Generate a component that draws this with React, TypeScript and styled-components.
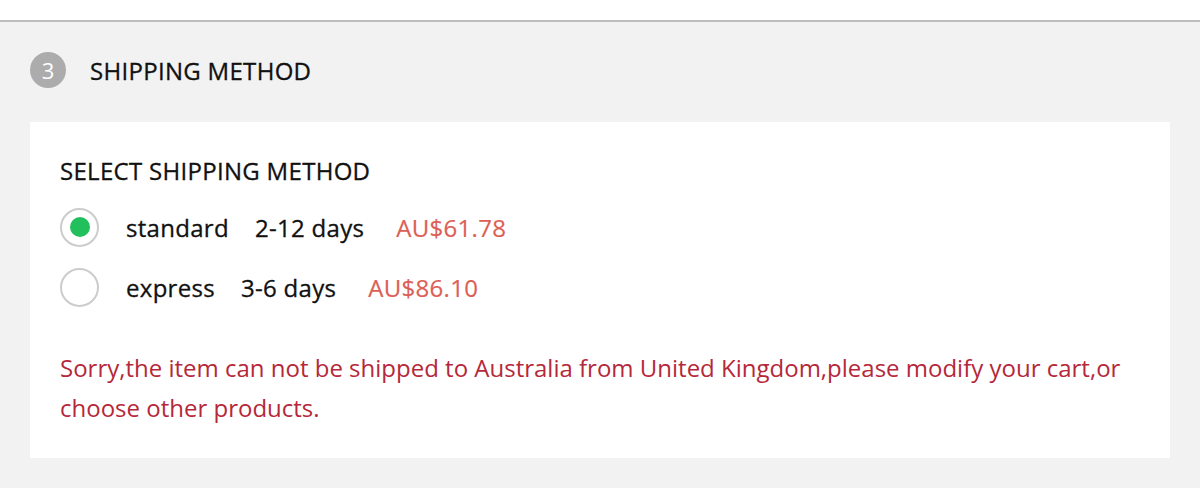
import React from "react";
import styled, { createGlobalStyle } from "styled-components";

const Global = createGlobalStyle`
  html, body { margin: 0; padding: 0; }
  body {
    background: #f2f2f2;
    font-family: "Open Sans", "Noto Sans", sans-serif;
    -webkit-font-smoothing: antialiased;
  }
`;

const TopBar = styled.div`
  height: 20px;
  background: #ffffff;
  border-bottom: 2px solid #bdbdbd;
`;

const Section = styled.section`
  padding: 30px 30px 30px;
`;

const StepHeader = styled.div`
  display: flex;
  align-items: center;
  gap: 24px;
  height: 36px;
  margin-bottom: 34px;
`;

const StepBadge = styled.span`
  width: 36px;
  height: 36px;
  border-radius: 50%;
  background: #acacac;
  color: #ffffff;
  font-size: 22px;
  display: flex;
  align-items: center;
  justify-content: center;
  line-height: 1;
`;

const StepTitle = styled.h2`
  margin: 0;
  font-size: 24px;
  font-weight: 400;
  letter-spacing: 0.3px;
  -webkit-text-stroke: 0.3px #111;
  color: #111;
`;

const Card = styled.div`
  background: #ffffff;
  padding: 34px 30px 30px;
`;

const CardTitle = styled.h3`
  margin: 0 0 21px;
  font-size: 24px;
  font-weight: 400;
  letter-spacing: 0.3px;
  -webkit-text-stroke: 0.3px #111;
  color: #111;
  line-height: 30px;
`;

const Options = styled.div`
  display: flex;
  flex-direction: column;
  gap: 20px;
`;

const Option = styled.label`
  display: flex;
  align-items: center;
  height: 40px;
  font-size: 24px;
  letter-spacing: 0.3px;
  color: #111;
`;

const Radio = styled.span<{ $checked?: boolean }>`
  box-sizing: border-box;
  width: 39px;
  height: 39px;
  border-radius: 50%;
  border: 2px solid #cccccc;
  display: flex;
  align-items: center;
  justify-content: center;
  margin-right: 27px;
  flex-shrink: 0;
  &::after {
    content: "";
    width: 20px;
    height: 20px;
    border-radius: 50%;
    background: ${(p) => (p.$checked ? "#22c05c" : "transparent")};
  }
`;

const Name = styled.span`
  margin-right: 26px;
  -webkit-text-stroke: 0.3px #111;
`;

const Days = styled.span`
  margin-right: 32px;
  -webkit-text-stroke: 0.3px #111;
`;

const Price = styled.span`
  color: #dc5f55;
  -webkit-text-stroke: 0.2px #dc5f55;
`;

const ErrorText = styled.p`
  margin: 41px 0 0;
  font-size: 24px;
  line-height: 40px;
  color: #b5283a;
`;

const methods = [
  { name: "standard", days: "2-12 days", price: "AU$61.78", checked: true },
  { name: "express", days: "3-6 days", price: "AU$86.10", checked: false },
];

export default function App() {
  return (
    <>
      <Global />
      <TopBar />
      <Section>
        <StepHeader>
          <StepBadge>3</StepBadge>
          <StepTitle>SHIPPING METHOD</StepTitle>
        </StepHeader>
        <Card>
          <CardTitle>SELECT SHIPPING METHOD</CardTitle>
          <Options>
            {methods.map((m) => (
              <Option key={m.name}>
                <Radio $checked={m.checked} />
                <Name>{m.name}</Name>
                <Days>{m.days}</Days>
                <Price>{m.price}</Price>
              </Option>
            ))}
          </Options>
          <ErrorText>
            Sorry,the item can not be shipped to Australia from United Kingdom,please modify your cart,or choose other products.
          </ErrorText>
        </Card>
      </Section>
    </>
  );
}
